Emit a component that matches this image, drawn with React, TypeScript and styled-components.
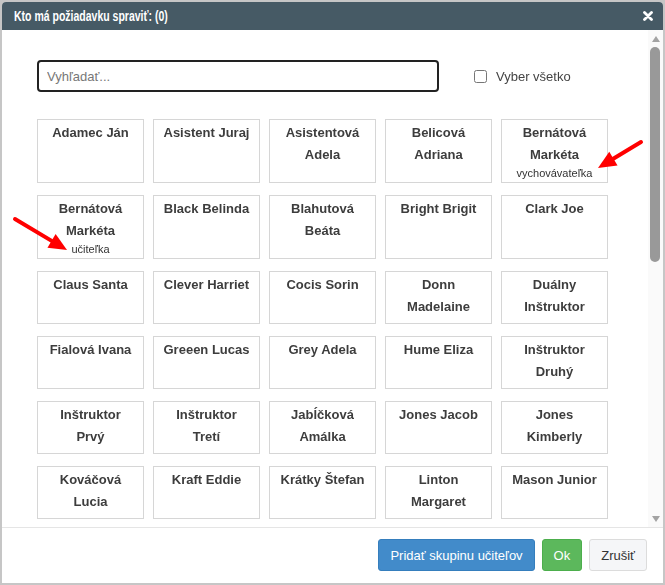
import React from 'react';
import styled, { createGlobalStyle } from 'styled-components';

type Person = { name: string; role?: string };

const people: Person[] = [
  { name: 'Adamec Ján' },
  { name: 'Asistent Juraj' },
  { name: 'Asistentová Adela' },
  { name: 'Belicová Adriana' },
  { name: 'Bernátová Markéta', role: 'vychovávateľka' },
  { name: 'Bernátová Markéta', role: 'učiteľka' },
  { name: 'Black Belinda' },
  { name: 'Blahutová Beáta' },
  { name: 'Bright Brigit' },
  { name: 'Clark Joe' },
  { name: 'Claus Santa' },
  { name: 'Clever Harriet' },
  { name: 'Cocis Sorin' },
  { name: 'Donn Madelaine' },
  { name: 'Duálny Inštruktor' },
  { name: 'Fialová Ivana' },
  { name: 'Greeen Lucas' },
  { name: 'Grey Adela' },
  { name: 'Hume Eliza' },
  { name: 'Inštruktor Druhý' },
  { name: 'Inštruktor Prvý' },
  { name: 'Inštruktor Tretí' },
  { name: 'Jabĺčková Amálka' },
  { name: 'Jones Jacob' },
  { name: 'Jones Kimberly' },
  { name: 'Kováčová Lucia' },
  { name: 'Kraft Eddie' },
  { name: 'Krátky Štefan' },
  { name: 'Linton Margaret' },
  { name: 'Mason Junior' },
];

// red annotation arrows, coordinates inside the dialog
const arrows = [
  { x1: 639, y1: 140, x2: 596, y2: 166 },
  { x1: 13, y1: 217, x2: 65, y2: 248 },
];

const arrowHead = (a: { x1: number; y1: number; x2: number; y2: number }) => {
  const dx = a.x2 - a.x1;
  const dy = a.y2 - a.y1;
  const len = Math.hypot(dx, dy);
  const ux = dx / len;
  const uy = dy / len;
  const bx = a.x2 - ux * 18;
  const by = a.y2 - uy * 18;
  return `${a.x2},${a.y2} ${bx - uy * 8},${by + ux * 8} ${bx + uy * 8},${by - ux * 8}`;
};

const shaftEnd = (a: { x1: number; y1: number; x2: number; y2: number }) => {
  const len = Math.hypot(a.x2 - a.x1, a.y2 - a.y1);
  return {
    x: a.x2 - ((a.x2 - a.x1) / len) * 12,
    y: a.y2 - ((a.y2 - a.y1) / len) * 12,
  };
};

const App = () => {
  return (
    <>
      <GlobalStyle />
      <Dialog>
        <Header>
          <Title>Kto má požiadavku spraviť: (0)</Title>
          <Close aria-label="close">
            <svg width="10" height="10" viewBox="0 0 10 10">
              <path d="M1.5 1.5 L8.5 8.5 M8.5 1.5 L1.5 8.5" stroke="#fff" strokeWidth="2.8" strokeLinecap="round" />
            </svg>
          </Close>
        </Header>
        <Body>
          <Content>
            <TopRow>
              <Search placeholder="Vyhľadať..." autoFocus />
              <SelectAll>
                <input type="checkbox" />
                Vyber všetko
              </SelectAll>
            </TopRow>
            <Grid>
              {people.map((p, i) => (
                <Card key={`person-${i}`}>
                  <Name>{p.name}</Name>
                  {p.role && <Role>{p.role}</Role>}
                </Card>
              ))}
            </Grid>
          </Content>
          <ScrollBar>
            <ScrollArrow>
              <svg width="8" height="6" viewBox="0 0 8 6">
                <polygon points="4,0 8,6 0,6" fill="#a3a3a3" />
              </svg>
            </ScrollArrow>
            <Track>
              <Thumb />
            </Track>
            <ScrollArrow>
              <svg width="8" height="6" viewBox="0 0 8 6">
                <polygon points="0,0 8,0 4,6" fill="#a3a3a3" />
              </svg>
            </ScrollArrow>
          </ScrollBar>
        </Body>
        <Footer>
          <Button $variant="primary">Pridať skupinu učiteľov</Button>
          <Button $variant="success">Ok</Button>
          <Button $variant="default">Zrušiť</Button>
        </Footer>
        <Annotations width="661" height="581" viewBox="0 0 661 581">
          {arrows.map((a, i) => {
            const end = shaftEnd(a);
            return (
              <g key={`arrow-${i}`}>
                <line
                  x1={a.x1}
                  y1={a.y1}
                  x2={end.x}
                  y2={end.y}
                  stroke="#ff0000"
                  strokeWidth="4"
                  strokeLinecap="round"
                />
                <polygon points={arrowHead(a)} fill="#ff0000" />
              </g>
            );
          })}
        </Annotations>
      </Dialog>
    </>
  );
};

export default App;

const GlobalStyle = createGlobalStyle`
  html, body {
    margin: 0;
    padding: 0;
    background: #c6c6c6;
  }
  #root {
    padding: 2px;
  }
  * {
    box-sizing: border-box;
  }
`;

const Dialog = styled.div`
  position: relative;
  width: 661px;
  height: 581px;
  background: #fff;
  border-radius: 4px 4px 0 0;
  display: flex;
  flex-direction: column;
  font-family: 'Liberation Sans', Arial, sans-serif;
  color: #333;
  overflow: hidden;
`;

const Header = styled.div`
  height: 28px;
  flex: none;
  background: #465a65;
  display: flex;
  align-items: center;
  justify-content: space-between;
  padding: 0 10px 0 12px;
`;

const Title = styled.span`
  display: inline-block;
  font-weight: bold;
  font-size: 14px;
  color: #fff;
  white-space: nowrap;
  transform: scaleX(0.75);
  transform-origin: left center;
`;

const Close = styled.span`
  display: flex;
  width: 10px;
  height: 10px;
`;

const Body = styled.div`
  flex: 1;
  min-height: 0;
  display: flex;
`;

const Content = styled.div`
  flex: 1;
  overflow: hidden;
  padding: 30px 24px 20px 35px;
`;

const ScrollBar = styled.div`
  width: 15px;
  flex: none;
  display: flex;
  flex-direction: column;
  background: #fafafa;
`;

const ScrollArrow = styled.div`
  height: 17px;
  flex: none;
  display: flex;
  align-items: center;
  justify-content: center;
`;

const Track = styled.div`
  flex: 1;
  padding: 0 3px 0 2px;
`;

const Thumb = styled.div`
  height: 215px;
  background: #999;
  border-radius: 5px;
`;

const TopRow = styled.div`
  display: flex;
  align-items: center;
  gap: 35px;
  margin-bottom: 27px;
`;

const Search = styled.input`
  width: 402px;
  height: 32px;
  border: 2px solid #222;
  border-radius: 4px;
  padding: 0 8px;
  font-family: 'Liberation Sans', Arial, sans-serif;
  font-size: 13px;
  color: #333;
  outline: none;

  &::placeholder {
    color: #777;
  }
`;

const SelectAll = styled.label`
  display: flex;
  align-items: center;
  gap: 9px;
  font-size: 13px;
  color: #444;

  input {
    margin: 0;
    width: 13px;
    height: 13px;
  }
`;

const Grid = styled.div`
  display: grid;
  grid-template-columns: repeat(5, 107px);
  gap: 12px 9px;
`;

const Card = styled.div`
  min-height: 53px;
  border: 1px solid #d6d6d6;
  padding: 2px 8px 2px;
  text-align: center;
`;

const Name = styled.div`
  font-size: 13px;
  font-weight: bold;
  line-height: 22px;
  color: #3d3d3d;
`;

const Role = styled.div`
  font-size: 11px;
  line-height: 14px;
  color: #333;
`;

const Footer = styled.div`
  flex: none;
  height: 56px;
  border-top: 1px solid #e5e5e5;
  display: flex;
  justify-content: flex-end;
  align-items: center;
  gap: 7px;
  padding: 0 16px 1px;
`;

const variants = {
  primary: { bg: '#428bca', border: '#357ebd', color: '#fff' },
  success: { bg: '#5cb85c', border: '#4cae4c', color: '#fff' },
  default: { bg: '#f5f6f8', border: '#dcdcdc', color: '#333' },
};

const Button = styled.button<{ $variant: keyof typeof variants }>`
  height: 32px;
  padding: 0 11px;
  border-radius: 3px;
  font-family: 'Liberation Sans', Arial, sans-serif;
  font-size: 13px;
  background: ${(p) => variants[p.$variant].bg};
  border: 1px solid ${(p) => variants[p.$variant].border};
  color: ${(p) => variants[p.$variant].color};
  cursor: pointer;
`;

const Annotations = styled.svg`
  position: absolute;
  left: 0;
  top: 0;
  pointer-events: none;
`;
